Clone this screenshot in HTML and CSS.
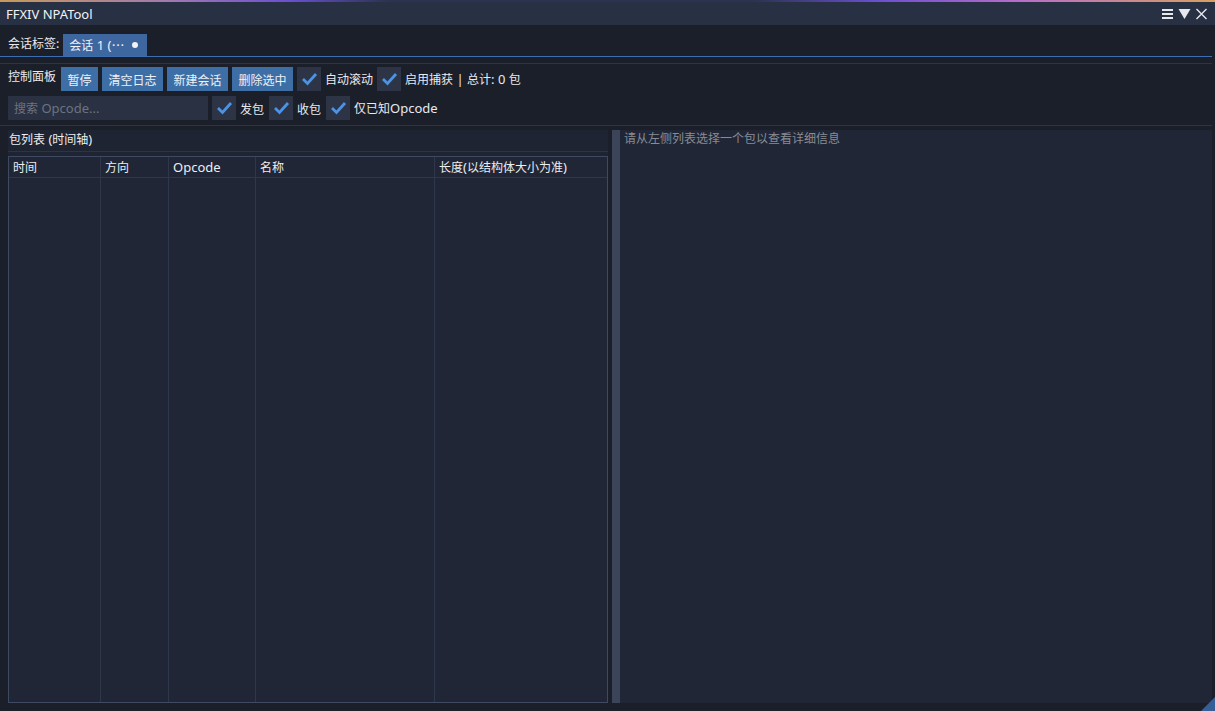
FILE: index.html
```html
<!DOCTYPE html>
<html lang="zh">
<head>
<meta charset="utf-8">
<title>FFXIV NPATool</title>
<link rel="stylesheet" href="styles.css">
</head>
<body>
<div class="window">
  <div class="titlebar">
    <span class="title en">FFXIV NPATool</span>
    <div class="title-icons">
      <svg width="13" height="12" viewBox="0 0 13 12"><rect x="1" y="1" width="11" height="2" fill="#e6e8ee"/><rect x="1" y="5" width="11" height="2" fill="#e6e8ee"/><rect x="1" y="9" width="11" height="2" fill="#e6e8ee"/></svg>
      <svg width="13" height="12" viewBox="0 0 13 12"><polygon points="0.5,1 12.5,1 6.5,11" fill="#e6e8ee"/></svg>
      <svg width="13" height="12" viewBox="0 0 13 12"><path d="M1.5 1 L11.5 11 M11.5 1 L1.5 11" stroke="#e6e8ee" stroke-width="1.4"/></svg>
    </div>
  </div>
  <div class="content">
    <div class="tabrow">
      <span class="label">会话标签:</span>
      <div class="tab">会话<span class="en"> 1 (⋯</span><span class="dot"></span></div>
    </div>
    <div class="tabline"></div>
    <div class="sep"></div>
    <div class="row row1">
      <span class="label lbl-top">控制面板</span>
      <button class="btn">暂停</button>
      <button class="btn">清空日志</button>
      <button class="btn">新建会话</button>
      <button class="btn">删除选中</button>
      <span class="check"><svg width="17" height="14" viewBox="0 0 17 14"><path d="M2 7 L6.5 11.5 L15 2" fill="none" stroke="#4a93e6" stroke-width="2.8"/></svg></span>
      <span class="label">自动滚动</span>
      <span class="check"><svg width="17" height="14" viewBox="0 0 17 14"><path d="M2 7 L6.5 11.5 L15 2" fill="none" stroke="#4a93e6" stroke-width="2.8"/></svg></span>
      <span class="label">启用捕获<span class="en"> | </span>总计<span class="en">: 0 </span>包</span>
    </div>
    <div class="row row2">
      <div class="search">搜索<span class="en"> Opcode...</span></div>
      <span class="check"><svg width="17" height="14" viewBox="0 0 17 14"><path d="M2 7 L6.5 11.5 L15 2" fill="none" stroke="#4a93e6" stroke-width="2.8"/></svg></span>
      <span class="label mr">发包</span>
      <span class="check"><svg width="17" height="14" viewBox="0 0 17 14"><path d="M2 7 L6.5 11.5 L15 2" fill="none" stroke="#4a93e6" stroke-width="2.8"/></svg></span>
      <span class="label mr">收包</span>
      <span class="check"><svg width="17" height="14" viewBox="0 0 17 14"><path d="M2 7 L6.5 11.5 L15 2" fill="none" stroke="#4a93e6" stroke-width="2.8"/></svg></span>
      <span class="label">仅已知<span class="en">Opcode</span></span>
    </div>
    <div class="sep sep2"></div>
    <div class="panes">
      <div class="left">
        <div class="pane-title">包列表<span class="en"> (</span>时间轴<span class="en">)</span></div>
        <div class="pane-line"></div>
        <div class="table">
          <div class="col c1"><div class="th">时间</div></div>
          <div class="col c2"><div class="th">方向</div></div>
          <div class="col c3"><div class="th en">Opcode</div></div>
          <div class="col c4"><div class="th">名称</div></div>
          <div class="col c5"><div class="th">长度<span class="en">(</span>以结构体大小为准<span class="en">)</span></div></div>
        </div>
      </div>
      <div class="splitter"></div>
      <div class="right">
        <div class="hint">请从左侧列表选择一个包以查看详细信息</div>
      </div>
    </div>
  </div>
  <div class="grip"></div>
</div>
</body>
</html>
```
FILE: styles.css
```css
* { box-sizing: border-box; }
html, body { margin: 0; padding: 0; }
body {
  width: 1215px;
  height: 711px;
  overflow: hidden;
  background: #1b1f2a;
  font-family: "Noto Sans CJK SC", "Noto Sans", sans-serif;
  font-size: 12px;
  color: #e8eaef;
}
.en { font-family: "Noto Sans", "Noto Sans CJK SC", sans-serif; font-size: 13px; }
.window {
  position: relative;
  width: 1215px;
  height: 711px;
  display: flex;
  flex-direction: column;
  background: #1b1f2a;
}
.titlebar {
  height: 25px;
  flex: none;
  background: #283044;
  border-top: 2px solid #6f5aa8;
  border-image: linear-gradient(90deg, #c89a5a 0%, #a07ab0 14%, #6a4fd0 24%, #2a3350 32%, #2a3350 62%, #6a4fd0 72%, #b86ec8 84%, #d8a060 100%) 1;
  display: flex;
  align-items: center;
  padding: 0 6px;
}
.title { flex: 1; line-height: 22px; color: #f2f3f6; }
.title-icons { display: flex; gap: 4px; align-items: center; margin-right: 1px; }
.title-icons svg { display: block; }
.content { flex: 1; display: flex; flex-direction: column; padding: 0 3px 0 8px; min-height: 0; }
.tabrow { display: flex; align-items: flex-end; height: 31px; }
.tabrow .label { margin-bottom: 5px; margin-right: 4px; }
.tab {
  background: #3f679f;
  height: 22px;
  line-height: 22px;
  padding: 0 9px 0 6px;
  color: #eef1f6;
  display: flex;
  align-items: center;
  white-space: pre;
}
.dot { display: inline-block; width: 6px; height: 6px; border-radius: 50%; background: #f3f4f7; margin-left: 8px; }
.tabline { height: 1px; background: #3d6fb0; margin-left: -8px; flex: none; }
.sep { height: 1px; background: #2d3446; margin: 6px 0 3px -8px; flex: none; }
.row { display: flex; align-items: center; height: 24px; flex: none; }
.row1 { margin-bottom: 5px; align-items: flex-start; }
.row1 .label { line-height: 24px; }
.row1 .lbl-top { line-height: 17px; }
.label { white-space: pre; color: #e8eaef; }
.lbl-top { margin-right: 5px; }
.btn {
  font: inherit;
  color: #eef1f6;
  background: #3d6ea6;
  border: none;
  height: 24px;
  padding: 0 6.5px;
  margin-right: 4px;
  cursor: pointer;
}
.check {
  width: 24px;
  height: 24px;
  background: #2c3446;
  display: inline-flex;
  align-items: center;
  justify-content: center;
  margin-right: 4px;
  flex: none;
}
.check + .label { margin-right: 4px; }
.label.mr { margin-right: 5px; }
.search {
  width: 200px;
  height: 24px;
  background: #2a3142;
  color: #6d7380;
  padding-left: 6px;
  line-height: 24px;
  margin-right: 4px;
  white-space: pre;
}
.sep2 { margin: 5px 0 4px -8px; }
.panes { flex: 1; display: flex; min-height: 0; padding-bottom: 8px; }
.left { width: 600px; display: flex; flex-direction: column; background: #1f2433; }
.pane-title { height: 21px; line-height: 17px; padding-top: 0; padding-left: 1px; color: #eceef2; white-space: pre; }
.pane-line { height: 1px; background: #2d3446; margin-bottom: 4px; }
.table {
  flex: 1;
  display: flex;
  border: 1px solid #3e4a61;
  background: #202636;
}
.col { border-right: 1px solid #2f384b; display: flex; flex-direction: column; }
.col:last-child { border-right: none; }
.th {
  height: 21px;
  line-height: 20px;
  border-bottom: 1px solid #2f384b;
  padding-left: 4px;
  color: #eceef2;
  white-space: nowrap;
}
.c1 { width: 92px; }
.c2 { width: 68px; }
.c3 { width: 87px; }
.c4 { width: 179px; }
.c5 { flex: 1; }
.splitter { width: 8px; margin-left: 4px; background: #3b4459; }
.right { flex: 1; background: #202636; }
.hint { color: #888c94; padding: 0 4px; line-height: 16px; }
.grip {
  position: absolute;
  right: 0;
  bottom: 0;
  width: 0;
  height: 0;
  border-left: 14px solid transparent;
  border-bottom: 14px solid #355f96;
}
```
